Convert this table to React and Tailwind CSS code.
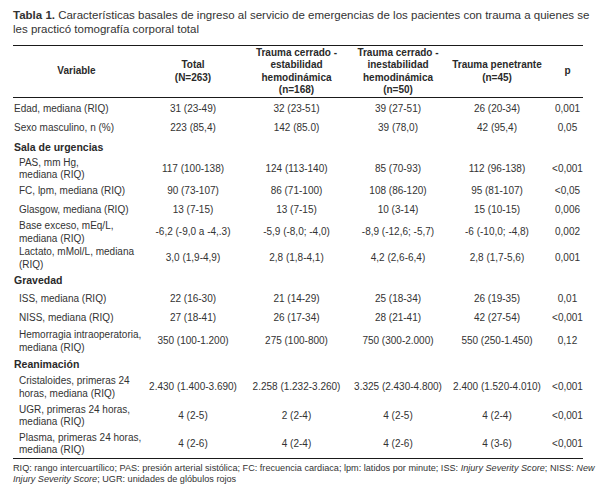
const COLS = 'grid grid-cols-[127px_106px_101px_102px_96px_45px]'

const ROWS = [
  { h: 'h-[20px]', label: ['Edad, mediana (RIQ)'], v: ['31 (23-49)', '32 (23-51)', '39 (27-51)', '26 (20-34)', '0,001'] },
  { h: 'h-[19px]', label: ['Sexo masculino, n (%)'], v: ['223 (85,4)', '142 (85.0)', '39 (78,0)', '42 (95,4)', '0,05'] },
  { h: 'h-[18px]', section: 'Sala de urgencias' },
  { h: 'h-[26px]', sub: true, label: ['PAS, mm Hg,', 'mediana (RIQ)'], v: ['117 (100-138)', '124 (113-140)', '85 (70-93)', '112 (96-138)', '<0,001'] },
  { h: 'h-[19px]', sub: true, label: ['FC, lpm, mediana (RIQ)'], v: ['90 (73-107)', '86 (71-100)', '108 (86-120)', '95 (81-107)', '<0,05'] },
  { h: 'h-[18px]', sub: true, label: ['Glasgow, mediana (RIQ)'], v: ['13 (7-15)', '13 (7-15)', '10 (3-14)', '15 (10-15)', '0,006'] },
  { h: 'h-[27px]', sub: true, label: ['Base exceso, mEq/L,', 'mediana (RIQ)'], v: ['-6,2 (-9,0 a -4,.3)', '-5,9 (-8,0; -4,0)', '-8,9 (-12,6; -5,7)', '-6 (-10,0; -4,8)', '0,002'] },
  { h: 'h-[25px]', sub: true, label: ['Lactato, mMol/L, mediana', '(RIQ)'], v: ['3,0 (1,9-4,9)', '2,8 (1,8-4,1)', '4,2 (2,6-6,4)', '2,8 (1,7-5,6)', '0,001'] },
  { h: 'h-[18px]', section: 'Gravedad' },
  { h: 'h-[20px]', sub: true, label: ['ISS, mediana (RIQ)'], v: ['22 (16-30)', '21 (14-29)', '25 (18-34)', '26 (19-35)', '0,01'] },
  { h: 'h-[19px]', sub: true, label: ['NISS, mediana (RIQ)'], v: ['27 (18-41)', '26 (17-34)', '28 (21-41)', '42 (27-54)', '<0,001'] },
  { h: 'h-[27px]', sub: true, label: ['Hemorragia intraoperatoria,', 'mediana (RIQ)'], v: ['350 (100-1.200)', '275 (100-800)', '750 (300-2.000)', '550 (250-1.450)', '0,12'] },
  { h: 'h-[18px]', section: 'Reanimación' },
  { h: 'h-[29px]', sub: true, label: ['Cristaloides, primeras 24', 'horas, mediana (RIQ)'], v: ['2.430 (1.400-3.690)', '2.258 (1.232-3.260)', '3.325 (2.430-4.800)', '2.400 (1.520-4.010)', '<0,001'] },
  { h: 'h-[28px]', sub: true, label: ['UGR, primeras 24 horas,', 'mediana (RIQ)'], v: ['4 (2-5)', '2 (2-4)', '4 (2-5)', '4 (2-4)', '<0,001'] },
  { h: 'h-[28px]', sub: true, label: ['Plasma, primeras 24 horas,', 'mediana (RIQ)'], v: ['4 (2-6)', '4 (2-4)', '4 (2-6)', '4 (3-6)', '<0,001'] },
]

const HEAD = [
  ['Total', '(N=263)'],
  ['Trauma cerrado -', 'estabilidad', 'hemodinámica', '(n=168)'],
  ['Trauma cerrado -', 'inestabilidad', 'hemodinámica', '(n=50)'],
  ['Trauma penetrante', '(n=45)'],
  ['p'],
]

function Lines({ lines }) {
  return lines.map((l, i) => (
    <span key={i}>
      {i > 0 && <br />}
      {l}
    </span>
  ))
}

export default function App() {
  return (
    <div className="w-[596px] h-[502px] bg-white px-[13px] pt-[8px] text-[#333] font-['Liberation_Sans',Arial,sans-serif]">
      <p className="text-[11.5px] leading-[14px] whitespace-nowrap">
        <b>Tabla 1.</b> Características basales de ingreso al servicio de emergencias de los pacientes con trauma a quienes se
        <br />
        les practicó tomografía corporal total
      </p>

      {/* Header */}
      <div className={`${COLS} mt-[9px] h-[53px] border-y border-[#1a1a1a] text-[10px] leading-[12.5px] font-bold text-[#2a2a2a]`}>
        <div className="flex items-center justify-center">Variable</div>
        {HEAD.map((h, i) => (
          <div key={i} className="flex items-center justify-center text-center whitespace-nowrap">
            <div><Lines lines={h} /></div>
          </div>
        ))}
      </div>

      {/* Body */}
      <div className="pt-[1px] border-b border-[#1a1a1a] text-[10px] leading-[12.5px]">
        {ROWS.map((r, i) =>
          r.section ? (
            <div key={i} className={`${r.h} flex items-center pl-[1px] font-bold text-[10.5px] text-[#2a2a2a]`}>
              {r.section}
            </div>
          ) : (
            <div key={i} className={`${COLS} ${r.h}`}>
              <div className={`flex items-center whitespace-nowrap ${r.sub ? 'pl-[6px]' : 'pl-[1px]'}`}>
                <div><Lines lines={r.label} /></div>
              </div>
              {r.v.map((v, j) => (
                <div key={j} className="flex items-center justify-center whitespace-nowrap">
                  {v}
                </div>
              ))}
            </div>
          )
        )}
      </div>

      <p className="mt-[4px] text-[9.15px] leading-[11px] whitespace-nowrap text-[#333]">
        RIQ: rango intercuartílico; PAS: presión arterial sistólica; FC: frecuencia cardiaca; lpm: latidos por minute; ISS: <i>Injury Severity Score</i>; NISS: <i>New</i>
        <br />
        <i>Injury Severity Score</i>; UGR: unidades de glóbulos rojos
      </p>
    </div>
  )
}
